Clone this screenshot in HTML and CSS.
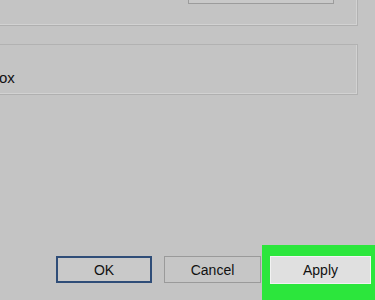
FILE: index.html
```html
<!DOCTYPE html>
<html lang="en">
<head>
    <meta charset="utf-8">
    <title>Properties</title>
    <link rel="stylesheet" href="styles.css">
</head>
<body>

<div class="dialog">
    <!-- upper group, scrolled off the top -->
    <div class="group group-top">
        <div class="top-button"></div>
    </div>

    <div class="group group-check">
        <span class="check-label">ox</span>
    </div>

    <!-- dialog buttons -->
    <div class="footer">
        <button class="btn btn-ok">OK</button>
        <button class="btn btn-cancel">Cancel</button>
        <div class="highlight">
            <button class="btn btn-apply">Apply</button>
        </div>
    </div>
</div>

</body>
</html>
```

FILE: styles.css
```css
body {
    margin: 0;
    padding: 0;
    background-color: #c4c4c4;
    font-family: "Liberation Sans", Arial, sans-serif;
    overflow: hidden;
}

.dialog {
    width: 375px;
    height: 300px;
    overflow: hidden;
}

.group {
    width: 358px;
    border-right: 1px solid #b2b2b2;
    border-bottom: 1px solid #b0b0b0;
    box-shadow: inset -1px -1px 0 #d2d2d2;
}

.group-top {
    height: 26px;
    display: flex;
    justify-content: flex-end;
    box-sizing: border-box;
}

.top-button {
    width: 144px;
    height: 3px;
    margin-right: 23px;
    border: 1px solid #9c9c9c;
    border-top: none;
    background-color: #c9c9c9;
}

.group-check {
    margin-top: 18px;
    height: 51px;
    border-top: 1px solid #b2b2b2;
    box-sizing: border-box;
    display: flex;
    align-items: center;
}

.check-label {
    margin-left: -1px;
    margin-top: 15px;
    font-size: 15px;
    color: #111;
}

.footer {
    margin-top: 150px;
    display: flex;
    align-items: flex-start;
    padding-left: 56px;
}

.btn {
    font-family: "Liberation Sans", Arial, sans-serif;
    font-size: 14px;
    color: #111;
    height: 27px;
    padding: 0;
    margin: 0;
    box-sizing: border-box;
}

.btn-ok {
    width: 96px;
    margin-top: 11px;
    border: 2px solid #2f4d78;
    background-color: #c9c9c9;
}

.btn-cancel {
    width: 97px;
    margin-top: 11px;
    margin-left: 12px;
    border: 1px solid #9a9a9a;
    background-color: #c6c6c6;
}

.highlight {
    margin-left: 1px;
    width: 113px;
    height: 60px;
    box-sizing: border-box;
    padding: 11px 4px 0 8px;
    background-color: #2ce63c;
}

.btn-apply {
    width: 101px;
    height: 28px;
    border: 1px solid #f2f2f2;
    background-color: #e0e0e0;
}
```
